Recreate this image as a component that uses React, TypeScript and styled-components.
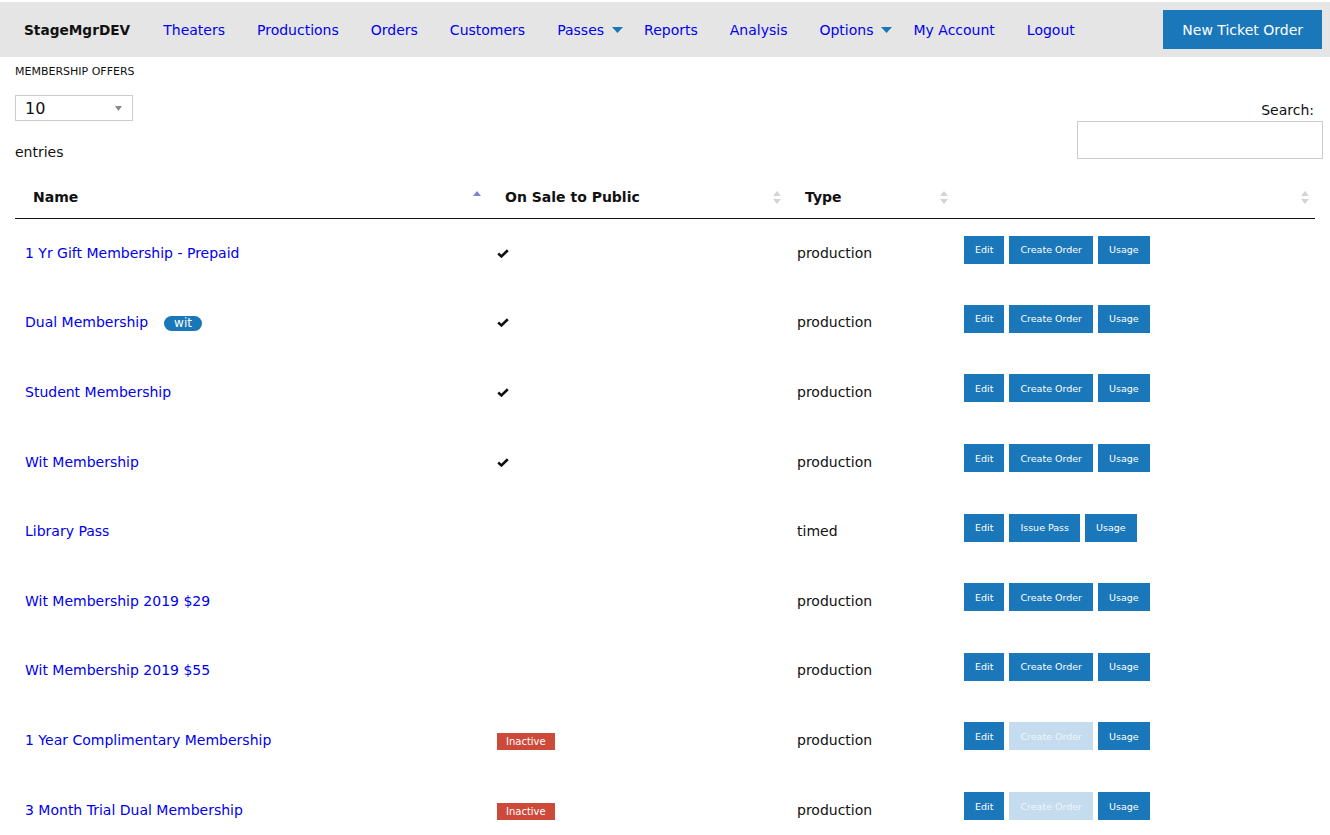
import React from "react";
import styled, { createGlobalStyle } from "styled-components";

type Offer = {
  name: string;
  tag?: string;
  onSale: "yes" | "no" | "inactive";
  type: string;
  middle: string;
  middleDisabled?: boolean;
};

const offers: Offer[] = [
  { name: "1 Yr Gift Membership - Prepaid", onSale: "yes", type: "production", middle: "Create Order" },
  { name: "Dual Membership", tag: "wit", onSale: "yes", type: "production", middle: "Create Order" },
  { name: "Student Membership", onSale: "yes", type: "production", middle: "Create Order" },
  { name: "Wit Membership", onSale: "yes", type: "production", middle: "Create Order" },
  { name: "Library Pass", onSale: "no", type: "timed", middle: "Issue Pass" },
  { name: "Wit Membership 2019 $29", onSale: "no", type: "production", middle: "Create Order" },
  { name: "Wit Membership 2019 $55", onSale: "no", type: "production", middle: "Create Order" },
  { name: "1 Year Complimentary Membership", onSale: "inactive", type: "production", middle: "Create Order", middleDisabled: true },
  { name: "3 Month Trial Dual Membership", onSale: "inactive", type: "production", middle: "Create Order", middleDisabled: true },
];

const navItems = [
  { label: "Theaters" },
  { label: "Productions" },
  { label: "Orders" },
  { label: "Customers" },
  { label: "Passes", drop: true },
  { label: "Reports" },
  { label: "Analysis" },
  { label: "Options", drop: true },
  { label: "My Account" },
  { label: "Logout" },
];

const columns = [
  { label: "Name", width: 472, active: true },
  { label: "On Sale to Public", width: 300 },
  { label: "Type", width: 167 },
  { label: "", width: 361 },
];

const SortIcon: React.FC<{ active?: boolean }> = ({ active }) => (
  <svg width="8" height="13" viewBox="0 0 8 13">
    <path d="M0 5 L4 0 L8 5 Z" fill={active ? "#7f80dd" : "#d4d4d4"} />
    {!active && <path d="M0 8 L8 8 L4 13 Z" fill="#d4d4d4" />}
  </svg>
);

const App: React.FC = () => {
  return (
    <>
      <GlobalStyle />
      <NavBar>
        <Brand>StageMgrDEV</Brand>
        {navItems.map((item) => (
          <NavLink key={item.label} href="#" $drop={item.drop}>
            {item.label}
            {item.drop && (
              <svg width="11" height="6" viewBox="0 0 11 6">
                <path d="M0 0 L11 0 L5.5 6 Z" fill="#1a77ba" />
              </svg>
            )}
          </NavLink>
        ))}
        <TicketButton>New Ticket Order</TicketButton>
      </NavBar>

      <Main>
        <PageTitle>Membership Offers</PageTitle>
        <Controls>
          <LengthBlock>
            <SelectBox>
              10
              <svg width="7" height="5" viewBox="0 0 7 5">
                <path d="M0 0 L7 0 L3.5 5 Z" fill="#8a8a8a" />
              </svg>
            </SelectBox>
            <Entries>entries</Entries>
          </LengthBlock>
          <SearchBlock>
            <SearchLabel>Search:</SearchLabel>
            <SearchInput />
          </SearchBlock>
        </Controls>

        <Table>
          <colgroup>
            {columns.map((c, i) => (
              <col key={i} style={{ width: c.width }} />
            ))}
          </colgroup>
          <thead>
            <tr>
              {columns.map((c, i) => (
                <HeadCell key={i}>
                  <HeadInner>
                    <span>{c.label}</span>
                    <SortIcon active={c.active} />
                  </HeadInner>
                </HeadCell>
              ))}
            </tr>
          </thead>
          <tbody>
            {offers.map((o) => (
              <tr key={o.name}>
                <Cell>
                  <NameLink href="#">{o.name}</NameLink>
                  {o.tag && <TagPill>{o.tag}</TagPill>}
                </Cell>
                <Cell>
                  {o.onSale === "yes" && (
                    <svg width="12" height="9" viewBox="0 0 12 9">
                      <path d="M1.2 4.6 L4.4 7.4 L10.8 1.2" stroke="#111" strokeWidth="2.6" fill="none" />
                    </svg>
                  )}
                  {o.onSale === "inactive" && <InactiveLabel>Inactive</InactiveLabel>}
                </Cell>
                <Cell>{o.type}</Cell>
                <ActionCell>
                  <ButtonGroup>
                    <ActionButton>Edit</ActionButton>
                    <ActionButton $disabled={o.middleDisabled}>{o.middle}</ActionButton>
                    <ActionButton>Usage</ActionButton>
                  </ButtonGroup>
                </ActionCell>
              </tr>
            ))}
          </tbody>
        </Table>
      </Main>
    </>
  );
};

export default App;

const GlobalStyle = createGlobalStyle`
  body {
    margin: 0;
    background: #ffffff;
    font-family: "DejaVu Sans", Verdana, sans-serif;
    color: #111;
  }
`;

const NavBar = styled.nav`
  margin-top: 2px;
  height: 55px;
  background: #e5e5e5;
  display: flex;
  align-items: center;
  padding: 0 8px 0 24px;
`;

const Brand = styled.span`
  font-size: 13.7px;
  font-weight: bold;
  color: #111;
  margin-right: 17px;
`;

const NavLink = styled.a<{ $drop?: boolean }>`
  display: flex;
  align-items: center;
  gap: 8px;
  font-size: 14px;
  color: #0000ee;
  text-decoration: none;
  padding: 0 ${(p) => (p.$drop ? "5px" : "16px")} 0 16px;
`;

const TicketButton = styled.button`
  margin-left: auto;
  height: 39px;
  padding: 0 19px;
  border: none;
  background: #1a77ba;
  color: #fff;
  font-family: inherit;
  font-size: 14px;
`;

const Main = styled.main`
  padding: 0 15px;
`;

const PageTitle = styled.div`
  margin-top: 8px;
  font-size: 11px;
  line-height: 13px;
  text-transform: uppercase;
`;

const Controls = styled.div`
  display: flex;
  justify-content: space-between;
  margin-top: 17px;
`;

const LengthBlock = styled.div`
  display: flex;
  flex-direction: column;
`;

const SelectBox = styled.div`
  box-sizing: border-box;
  width: 118px;
  height: 26px;
  border: 1px solid #cccccc;
  padding: 0 10px 0 9px;
  display: flex;
  align-items: center;
  justify-content: space-between;
  font-size: 16px;
`;

const Entries = styled.div`
  margin-top: 23px;
  font-size: 14px;
  line-height: 17px;
`;

const SearchBlock = styled.div`
  display: flex;
  flex-direction: column;
  align-items: flex-end;
  margin-right: -8px;
`;

const SearchLabel = styled.label`
  margin-top: 7px;
  padding-right: 9px;
  font-size: 14px;
  line-height: 17px;
`;

const SearchInput = styled.input`
  box-sizing: border-box;
  margin-top: 2px;
  width: 246px;
  height: 38px;
  border: 1px solid #cccccc;
`;

const Table = styled.table`
  width: 100%;
  margin-top: 16px;
  border-collapse: collapse;
  table-layout: fixed;
`;

const HeadCell = styled.th`
  box-sizing: border-box;
  height: 41px;
  padding: 0 6px 0 18px;
  border-bottom: 1px solid #111;
  text-align: left;
  font-size: 14px;
  font-weight: bold;
  vertical-align: middle;
`;

const HeadInner = styled.div`
  display: flex;
  align-items: center;
  justify-content: space-between;
`;

const Cell = styled.td`
  box-sizing: border-box;
  height: 69.6px;
  padding: 0 10px;
  font-size: 14px;
  vertical-align: middle;
`;

const ActionCell = styled(Cell)`
  padding-bottom: 7px;
`;

const NameLink = styled.a`
  color: #0000ee;
  text-decoration: none;
`;

const TagPill = styled.span`
  display: inline-flex;
  align-items: center;
  height: 15px;
  padding: 0 10px;
  margin-left: 16px;
  border-radius: 8px;
  background: #1a77ba;
  color: #fff;
  font-size: 12px;
  vertical-align: middle;
`;

const InactiveLabel = styled.div`
  display: flex;
  align-items: center;
  width: fit-content;
  height: 17px;
  margin-top: 4px;
  padding: 0 9px;
  background: #cd4a3a;
  color: #fff;
  font-size: 10px;
`;

const ButtonGroup = styled.div`
  display: flex;
  gap: 5px;
`;

const ActionButton = styled.button<{ $disabled?: boolean }>`
  height: 28px;
  padding: 0 11px;
  border: none;
  background: ${(p) => (p.$disabled ? "#c5dcee" : "#1a77ba")};
  color: ${(p) => (p.$disabled ? "#eef5fb" : "#fff")};
  font-family: inherit;
  font-size: 9.5px;
`;
